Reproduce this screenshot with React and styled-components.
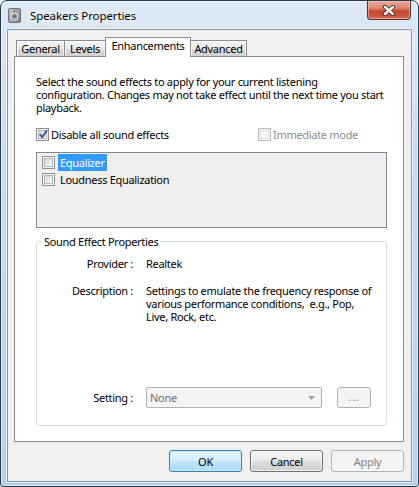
import React from "react";
import styled, { createGlobalStyle, css } from "styled-components";

const FONT = `"Segoe UI", "Noto Sans", "Liberation Sans", sans-serif`;

const Global = createGlobalStyle`
  html, body { margin: 0; padding: 0; background: #ffffff; overflow: hidden; }
  * { box-sizing: border-box; }
  body { font-family: ${FONT}; font-size: 11px; letter-spacing: -0.3px; color: #000; }
`;

const Window = styled.div`
  width: 419px;
  height: 487px;
  border: 1px solid #27394d;
  border-radius: 7px 7px 3px 3px;
  background: linear-gradient(to bottom, #dce9f6 0%, #c9dcf0 35%, #b7cfe9 100%);
  box-shadow: inset 0 0 0 1px rgba(255, 255, 255, 0.55);
  display: flex;
  flex-direction: column;
  padding: 0 6px 4px 6px;
  overflow: hidden;
`;

const TitleBar = styled.div`
  height: 28px;
  display: flex;
  align-items: center;
  flex: none;
`;

const TitleIcon = styled.svg`
  width: 13px;
  height: 15px;
  margin-left: 1px;
  margin-top: 1px;
  flex: none;
`;

const TitleText = styled.span`
  margin-left: 9px;
  font-size: 11.5px;
  letter-spacing: -0.1px;
  margin-top: 1px;
  color: #000;
  text-shadow: 0 0 6px #fff, 0 0 8px #fff, 0 0 10px rgba(255, 255, 255, 0.9);
`;

const CloseButton = styled.div`
  margin-left: auto;
  align-self: flex-start;
  width: 44px;
  height: 19px;
  margin-right: 1px;
  border: 1px solid #5f2b22;
  border-top: none;
  border-radius: 0 0 4px 4px;
  background: linear-gradient(to bottom, #e9a99a 0%, #d98771 40%, #c64a31 55%, #c8553d 85%, #d7836c 100%);
  box-shadow: inset 0 0 0 1px rgba(255, 220, 210, 0.45);
  display: flex;
  align-items: center;
  justify-content: center;
`;

const Client = styled.div`
  flex: 1;
  background: #f0f0f0;
  border: 1px solid #8397ad;
  box-shadow: 0 0 0 1px rgba(255, 255, 255, 0.6);
  padding: 7px 7px 0 6px;
  display: flex;
  flex-direction: column;
`;

const TabStrip = styled.div`
  display: flex;
  align-items: flex-end;
  height: 19px;
  padding-left: 2px;
  position: relative;
  z-index: 1;
`;

const Tab = styled.div`
  height: 16px;
  width: ${(p) => p.$w}px;
  border: 1px solid #898c95;
  border-bottom: none;
  margin-left: -1px;
  display: flex;
  align-items: center;
  justify-content: center;
  line-height: 14px;
  padding-top: 1px;
  white-space: nowrap;
  background: linear-gradient(to bottom, #f2f2f2 0%, #ebebeb 50%, #dddddd 51%, #cfcfcf 100%);
  box-shadow: inset 1px 1px 0 rgba(255, 255, 255, 0.8), inset -1px 0 0 rgba(255, 255, 255, 0.6);
  ${(p) =>
    p.$active &&
    css`
      height: 20px;
      margin-bottom: -1px;
      background: #ffffff;
      box-shadow: none;
      padding-top: 0;
      padding-bottom: 3px;
    `}
  &:first-child { margin-left: 0; }
`;

const Panel = styled.div`
  height: 386px;
  border: 1px solid #898c95;
  background: #ffffff;
  padding: 18px 16px 0 21px;
  display: flex;
  flex-direction: column;
`;

const Intro = styled.p`
  margin: 0;
  line-height: 13px;
  white-space: nowrap;
`;

const OptionRow = styled.div`
  margin-top: 13px;
  height: 15px;
  display: grid;
  grid-template-columns: 222px 1fr;
  align-items: center;
`;

const CheckLabel = styled.label`
  display: flex;
  align-items: center;
  gap: 2px;
  color: ${(p) => (p.$disabled ? "#8d8d8d" : "#000")};
  white-space: nowrap;
`;

const Box = styled.span`
  width: 13px;
  height: 13px;
  flex: none;
  position: relative;
  border: 1px solid ${(p) => (p.$disabled ? "#b8b8b8" : "#8e8f8f")};
  background: #f5f5f5;
  &::before {
    content: "";
    position: absolute;
    inset: 1px;
    border: 1px solid ${(p) => (p.$disabled ? "#e2e2e2" : "#b1b5ba")};
    background: ${(p) =>
      p.$disabled
        ? "#f4f4f4"
        : "linear-gradient(135deg, #d5d7da 0%, #e8e9ea 50%, #f9f9f9 100%)"};
  }
`;

const CheckMark = styled.svg`
  position: absolute;
  left: 0px;
  top: -1px;
  width: 12px;
  height: 12px;
  z-index: 1;
`;

const ListBox = styled.div`
  margin-top: 10px;
  height: 76px;
  flex: none;
  border: 1px solid #828790;
  background: #efefef;
  padding: 1px 0 0 5px;
`;

const ListItem = styled.div`
  height: 17px;
  display: flex;
  align-items: center;
  gap: 3px;
`;

const ItemText = styled.span`
  height: 17px;
  line-height: 17px;
  padding: 0 2px;
  white-space: nowrap;
  background: ${(p) => (p.$selected ? "#3399ff" : "transparent")};
  color: ${(p) => (p.$selected ? "#fff" : "#000")};
`;

const Group = styled.fieldset`
  margin: 6px 0 0 0;
  padding: 0 0 17px 0;
  min-inline-size: 0;
  border: 1px solid #d5dfe5;
  border-radius: 3px;
`;

const Legend = styled.legend`
  margin-left: 5px;
  padding: 0 2px;
  line-height: 15px;
`;

const PropRow = styled.div`
  display: flex;
  align-items: ${(p) => (p.$center ? "center" : "flex-start")};
  margin-top: ${(p) => p.$mt}px;
  line-height: 13px;
`;

const PropLabel = styled.div`
  width: 96px;
  flex: none;
  text-align: right;
  white-space: nowrap;
`;

const PropValue = styled.div`
  margin-left: 13px;
  white-space: nowrap;
`;

const Combo = styled.div`
  width: 176px;
  height: 21px;
  border: 1px solid #adb2b5;
  border-radius: 2px;
  background: #f4f4f4;
  display: flex;
  align-items: center;
  padding: 0 6px 0 3px;
  color: #6d6d6d;
`;

const ComboArrow = styled.svg`
  margin-left: auto;
  width: 7px;
  height: 4px;
`;

const DotsButton = styled.div`
  margin-left: 15px;
  width: 34px;
  height: 21px;
  border: 1px solid #adb2b5;
  border-radius: 3px;
  background: #f4f4f4;
  color: #838383;
  display: flex;
  align-items: center;
  justify-content: center;
  font-size: 10px;
  letter-spacing: 1px;
  padding-bottom: 1px;
`;

const ButtonRow = styled.div`
  margin-top: 8px;
  display: flex;
  justify-content: flex-end;
  gap: 8px;
`;

const variants = {
  default: css`
    border: 1px solid #3c7fb1;
    background: linear-gradient(to bottom, #e4f4fc 0%, #d4eefb 50%, #c0e6f9 51%, #abdcf7 100%);
    box-shadow: inset 0 0 0 1px #c6ecfc;
  `,
  normal: css`
    border: 1px solid #707070;
    background: linear-gradient(to bottom, #f2f2f2 0%, #ebebeb 50%, #dddddd 51%, #cfcfcf 100%);
    box-shadow: inset 0 0 0 1px rgba(255, 255, 255, 0.75);
  `,
  disabled: css`
    border: 1px solid #adb2b5;
    background: #f4f4f4;
    color: #838383;
  `,
};

const Button = styled.div`
  width: 73px;
  height: 22px;
  border-radius: 3px;
  display: flex;
  align-items: center;
  justify-content: center;
  ${(p) => variants[p.$variant || "normal"]}
`;

function CheckBox({ checked, disabled }) {
  return (
    <Box $disabled={disabled}>
      {checked && (
        <CheckMark viewBox="0 0 12 12">
          <path d="M2.8 6.2 L5.2 9.2 L10 2.4" fill="none" stroke="#3d5a99" strokeWidth="2" strokeLinejoin="round" />
        </CheckMark>
      )}
    </Box>
  );
}

export default function App() {
  return (
    <>
      <Global />
      <Window>
        <TitleBar>
          <TitleIcon viewBox="0 0 13 15">
            <defs>
              <linearGradient id="spk" x1="0" y1="0" x2="1" y2="1">
                <stop offset="0" stopColor="#c9cbcd" />
                <stop offset="1" stopColor="#7d8185" />
              </linearGradient>
            </defs>
            <rect x="0.5" y="0.5" width="12" height="14" rx="1.5" fill="url(#spk)" stroke="#6b6f74" />
            <circle cx="6.5" cy="8.5" r="3.6" fill="#9a9ea3" stroke="#eef0f2" strokeWidth="0.8" />
            <circle cx="6.5" cy="8.5" r="1.4" fill="#5f6368" />
            <circle cx="6.5" cy="3" r="1" fill="#5f6368" />
          </TitleIcon>
          <TitleText>Speakers Properties</TitleText>
          <CloseButton>
            <svg width="14" height="11" viewBox="0 0 14 11">
              <path d="M3 2 L11 9 M11 2 L3 9" stroke="#4a2a26" strokeWidth="4.2" strokeLinecap="round" />
              <path d="M3 2 L11 9 M11 2 L3 9" stroke="#ffffff" strokeWidth="2.4" strokeLinecap="round" />
            </svg>
          </CloseButton>
        </TitleBar>
        <Client>
          <TabStrip>
            <Tab $w={49}>General</Tab>
            <Tab $w={42}>Levels</Tab>
            <Tab $w={86} $active>Enhancements</Tab>
            <Tab $w={57}>Advanced</Tab>
          </TabStrip>
          <Panel>
            <Intro>
              Select the sound effects to apply for your current listening
              <br />
              configuration. Changes may not take effect until the next time you start
              <br />
              playback.
            </Intro>
            <OptionRow>
              <CheckLabel>
                <CheckBox checked />
                Disable all sound effects
              </CheckLabel>
              <CheckLabel $disabled>
                <CheckBox disabled />
                Immediate mode
              </CheckLabel>
            </OptionRow>
            <ListBox>
              <ListItem>
                <CheckBox />
                <ItemText $selected>Equalizer</ItemText>
              </ListItem>
              <ListItem>
                <CheckBox />
                <ItemText>Loudness Equalization</ItemText>
              </ListItem>
            </ListBox>
            <Group>
              <Legend>Sound Effect Properties</Legend>
              <PropRow $mt={8}>
                <PropLabel>Provider :</PropLabel>
                <PropValue>Realtek</PropValue>
              </PropRow>
              <PropRow $mt={14}>
                <PropLabel>Description :</PropLabel>
                <PropValue>
                  Settings to emulate the frequency response of
                  <br />
                  various performance conditions,&nbsp; e.g., Pop,
                  <br />
                  Live, Rock, etc.
                </PropValue>
              </PropRow>
              <PropRow $mt={64} $center>
                <PropLabel>Setting :</PropLabel>
                <PropValue>
                  <PropRow $mt={0} $center>
                    <Combo>
                      None
                      <ComboArrow viewBox="0 0 7 4">
                        <path d="M0 0 H7 L3.5 4 Z" fill="#a3a3a3" />
                      </ComboArrow>
                    </Combo>
                    <DotsButton>...</DotsButton>
                  </PropRow>
                </PropValue>
              </PropRow>
            </Group>
          </Panel>
          <ButtonRow>
            <Button $variant="default">OK</Button>
            <Button>Cancel</Button>
            <Button $variant="disabled">Apply</Button>
          </ButtonRow>
        </Client>
      </Window>
    </>
  );
}
